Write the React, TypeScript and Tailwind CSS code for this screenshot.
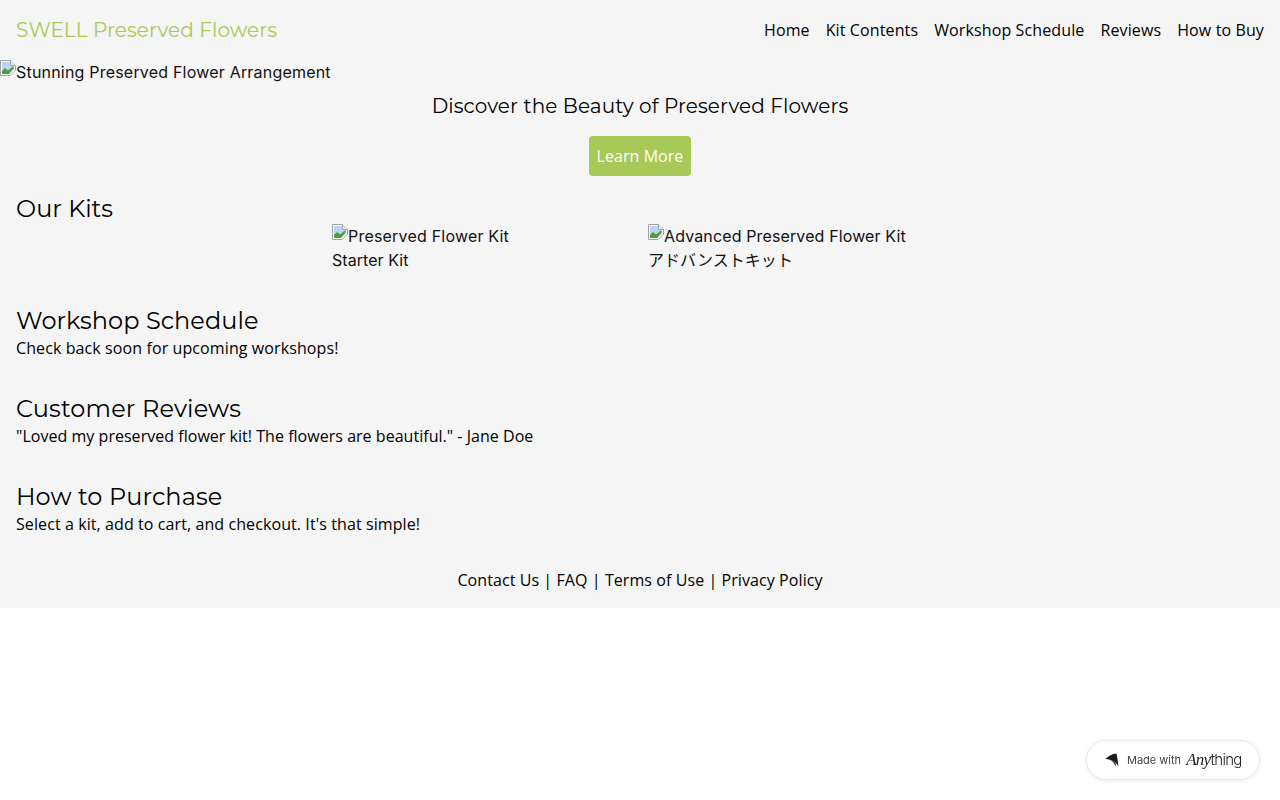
const heading = "font-['Montserrat','Inter',sans-serif]";

function BrokenImage() {
  return (
    <svg width="16" height="16" viewBox="0 0 16 16" className="inline-block align-top">
      <path d="M0.5 0.5H10.5L15.5 5.5V10L10 15.5H0.5Z" fill="#ffffff" stroke="#a3a3a3" />
      <path d="M2 2H10V6H14V9L9 14H2Z" fill="#bcd3f5" />
      <path d="M10.5 0.5V5.5H15.5" fill="#eeeeee" stroke="#a3a3a3" />
      <path d="M2 14V11L5 8L8 10.5L13 6.5L14 8L9 14Z" fill="#4fa03a" />
    </svg>
  );
}

function AltImage({ alt, tracking }: { alt: string; tracking: string }) {
  return (
    <span className={`inline text-[16px] leading-6 text-[#111111] font-['Inter',sans-serif] ${tracking}`}>
      <BrokenImage />
      {alt}
    </span>
  );
}

const navItems = ['Home', 'Kit Contents', 'Workshop Schedule', 'Reviews', 'How to Buy'];
const footerItems = ['Contact Us', 'FAQ', 'Terms of Use', 'Privacy Policy'];

export default function App() {
  return (
    <div className="min-h-[800px] bg-white font-['Open_Sans',sans-serif] text-[16px] leading-6 text-black antialiased">
      <div className="bg-[#f5f5f5]">
        <header className="flex h-[60px] items-center justify-between px-4">
          <div className={`${heading} text-[20px] leading-[26px] tracking-[0.09px] text-[#a7c957]`}>SWELL Preserved Flowers</div>
          <nav className="flex gap-4 tracking-[0.12px]">
            {navItems.map(item => (
              <a key={item}>{item}</a>
            ))}
          </nav>
        </header>

        <section className="flex flex-col">
          <div className="h-6">
            <AltImage alt="Stunning Preserved Flower Arrangement" tracking="tracking-[0.2px]" />
          </div>
          <h1 className={`${heading} mt-[10px] h-6 text-center text-[20px] leading-[25px] tracking-[0.1px]`}>Discover the Beauty of Preserved Flowers</h1>
          <div className="mt-[18px] flex justify-center">
            <button className="h-10 rounded bg-[#a7c957] px-2 tracking-[0.05px] text-white">Learn More</button>
          </div>
        </section>

        <section className="mt-4 px-4">
          <h2 className={`${heading} h-8 text-[24px] leading-[34px]`}>Our Kits</h2>
          <div className="flex justify-center gap-4">
            {[
              { alt: 'Preserved Flower Kit', name: 'Starter Kit', tracking: 'tracking-[0.2px]' },
              { alt: 'Advanced Preserved Flower Kit', name: 'アドバンストキット', tracking: 'tracking-[0.13px]' },
            ].map(kit => (
              <div key={kit.alt} className="w-[300px]">
                <div className="h-6">
                  <AltImage alt={kit.alt} tracking={kit.tracking} />
                </div>
                <div className="font-['Inter','Noto_Sans_CJK_JP',sans-serif] tracking-[0.05px] text-[#111111]">{kit.name}</div>
              </div>
            ))}
          </div>
        </section>

        <section className="mt-8 px-4">
          <h2 className={`${heading} h-8 text-[24px] leading-[34px] tracking-[0.06px]`}>Workshop Schedule</h2>
          <p className="tracking-[0.1px]">Check back soon for upcoming workshops!</p>
        </section>

        <section className="mt-8 px-4">
          <h2 className={`${heading} h-8 text-[24px] leading-[34px] tracking-[0.15px]`}>Customer Reviews</h2>
          <p className="tracking-[0.03px]">"Loved my preserved flower kit! The flowers are beautiful." - Jane Doe</p>
        </section>

        <section className="mt-8 px-4">
          <h2 className={`${heading} h-8 text-[24px] leading-[34px] tracking-[0.1px]`}>How to Purchase</h2>
          <p className="tracking-[0.09px]">Select a kit, add to cart, and checkout. It's that simple!</p>
        </section>

        <footer className="mt-8 pb-4 text-center tracking-[0.08px]">
          {footerItems.map((item, i) => (
            <span key={item}>
              {i > 0 && ' | '}
              <a>{item}</a>
            </span>
          ))}
        </footer>
      </div>

      <div className="fixed bottom-5 right-5 flex h-10 w-[174px] items-center gap-2 rounded-full border border-[#e8e8e8] bg-white pl-[18px] shadow-[0_1px_4px_rgba(0,0,0,0.08)]">
        <svg width="14" height="14" viewBox="0 0 14 14">
          <path d="M0.5 6C3 3 7.5 0.8 11.5 0.5C12.3 4.5 13 9 13.5 13.5C12 10 8 6.5 0.5 6Z" fill="#1c1c1c" />
          <path d="M3 7C6.5 7 9.5 9.5 10.5 13.5C11 12 10.8 11 10.5 10C8.8 8 6 7 3 7Z" fill="#1c1c1c" />
        </svg>
        <span className="flex items-center gap-[5px] font-['Inter',sans-serif] text-[11px] text-[#444444]">
          Made with
          <span className="flex items-baseline text-[15px] tracking-[-0.7px] text-[#222222]">
            <span className="font-['Liberation_Serif',serif] text-[17px] italic">Any</span>
            <span className="font-light">thing</span>
          </span>
        </span>
      </div>
    </div>
  );
}
